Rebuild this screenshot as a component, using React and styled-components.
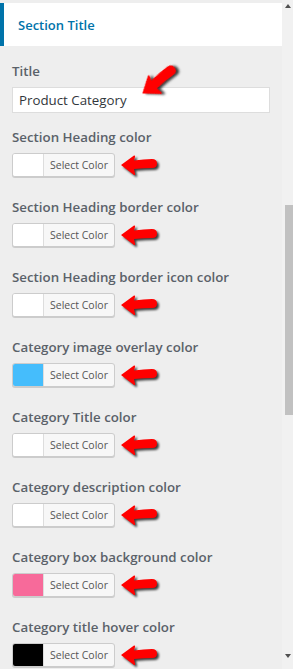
import React from 'react'
import styled, { createGlobalStyle } from 'styled-components'

const GlobalStyle = createGlobalStyle`
  html, body {
    margin: 0;
    padding: 0;
    background: #eeeeee;
  }
  body {
    font-family: "Open Sans", "Noto Sans", "Liberation Sans", sans-serif;
    overflow: hidden;
  }
`

const Frame = styled.div`
  display: flex;
  width: 293px;
  height: 669px;
  overflow: hidden;
`

const Panel = styled.div`
  flex: 1;
  display: flex;
  flex-direction: column;
  background: #eeeeee;
  min-width: 0;
`

const Header = styled.div`
  flex-shrink: 0;
  margin-top: 3px;
  height: 43px;
  background: #fff;
  border-left: 4px solid #0073aa;
  display: flex;
  align-items: center;
  padding-left: 14px;
  box-sizing: border-box;
  h3 {
    margin: 0;
    font-size: 13px;
    font-weight: 600;
    color: #0073aa;
  }
`

const Body = styled.div`
  flex-shrink: 0;
  padding: 16px 12px 0 12px;
`

const Field = styled.div`
  position: relative;
  margin-bottom: ${p => p.gap || 21}px;
`

const Label = styled.div`
  font-size: 13.3px;
  line-height: 18px;
  font-weight: 600;
  color: #5a6169;
  margin-bottom: 7px;
  white-space: nowrap;
`

const TextInput = styled.input`
  display: block;
  width: 258px;
  height: 26px;
  box-sizing: border-box;
  border: 1px solid #ddd;
  background: #fff;
  padding: 0 6px;
  font-family: "Open Sans", "Noto Sans", sans-serif;
  font-size: 13.3px;
  color: #32373c;
  outline: none;
`

const Row = styled.div`
  display: flex;
  align-items: center;
  height: 24px;
`

const ColorButton = styled.button`
  display: flex;
  align-items: stretch;
  height: 24px;
  width: 103px;
  padding: 0;
  border: 1px solid #ccc;
  border-radius: 3px;
  box-shadow: 0 1px 0 #ccc;
  background: #f7f7f7;
  overflow: hidden;
  box-sizing: border-box;
  cursor: pointer;
`

const Swatch = styled.span`
  width: 30px;
  background: ${p => p.color};
  border-right: 1px solid #ddd;
`

const ButtonText = styled.span`
  flex: 1;
  display: flex;
  align-items: center;
  justify-content: center;
  font-family: "Open Sans", "Noto Sans", sans-serif;
  font-size: 10.5px;
  color: #555;
`

const ArrowSvg = styled.svg`
  display: block;
  margin-left: 5px;
  margin-top: 2px;
  filter: drop-shadow(2px 2px 1px rgba(0, 0, 0, 0.75));
`

const TitleArrow = styled.div`
  position: absolute;
  left: 130px;
  top: 21px;
  transform: rotate(-36deg) scale(1.15);
  transform-origin: 0 50%;
  svg {
    margin: 0;
  }
`

const Scrollbar = styled.div`
  width: 11px;
  background: #f1f1f1;
  display: flex;
  flex-direction: column;
  align-items: center;
`

const ScrollArrow = styled.div`
  width: 0;
  height: 0;
  border-left: 3.5px solid transparent;
  border-right: 3.5px solid transparent;
  ${p => (p.down
    ? 'border-top: 4px solid #505050; margin-top: auto; margin-bottom: 11px;'
    : 'border-bottom: 4px solid #505050; margin-top: 4px;')}
`

const Thumb = styled.div`
  width: 8px;
  margin-left: 2px;
  height: 210px;
  margin-top: 197px;
  background: #c1c1c1;
`

const Arrow = () => (
  <ArrowSvg width="38" height="24" viewBox="0 0 38 24">
    <path
      d="M1 11 L14 1.5 Q15.5 1 15 3 L14 6.5 Q24 5 32 5 Q37 5 37 9.5 Q37 14 32 14 Q24 14 14 15 L15 19.5 Q15.5 21.5 14 21 Z"
      fill="#ff0000"
    />
  </ArrowSvg>
)

const colorFields = [
  { label: 'Section Heading color', color: '#ffffff' },
  { label: 'Section Heading border color', color: '#ffffff' },
  { label: 'Section Heading border icon color', color: '#ffffff' },
  { label: 'Category image overlay color', color: '#45bdfc' },
  { label: 'Category Title color', color: '#ffffff' },
  { label: 'Category description color', color: '#ffffff' },
  { label: 'Category box background color', color: '#f76a9a' },
  { label: 'Category title hover color', color: '#000000' }
]

const App = () => {
  return (
    <Frame>
      <GlobalStyle />
      <Panel>
        <Header>
          <h3>Section Title</h3>
        </Header>
        <Body>
          <Field gap={15}>
            <Label>Title</Label>
            <TextInput defaultValue="Product Category" />
            <TitleArrow>
              <Arrow />
            </TitleArrow>
          </Field>
          {colorFields.map((item, idx) => (
            <Field key={idx}>
              <Label>{item.label}</Label>
              <Row>
                <ColorButton>
                  <Swatch color={item.color} />
                  <ButtonText>Select Color</ButtonText>
                </ColorButton>
                <Arrow />
              </Row>
            </Field>
          ))}
        </Body>
      </Panel>
      <Scrollbar>
        <ScrollArrow />
        <Thumb />
        <ScrollArrow down />
      </Scrollbar>
    </Frame>
  )
}

export default App
